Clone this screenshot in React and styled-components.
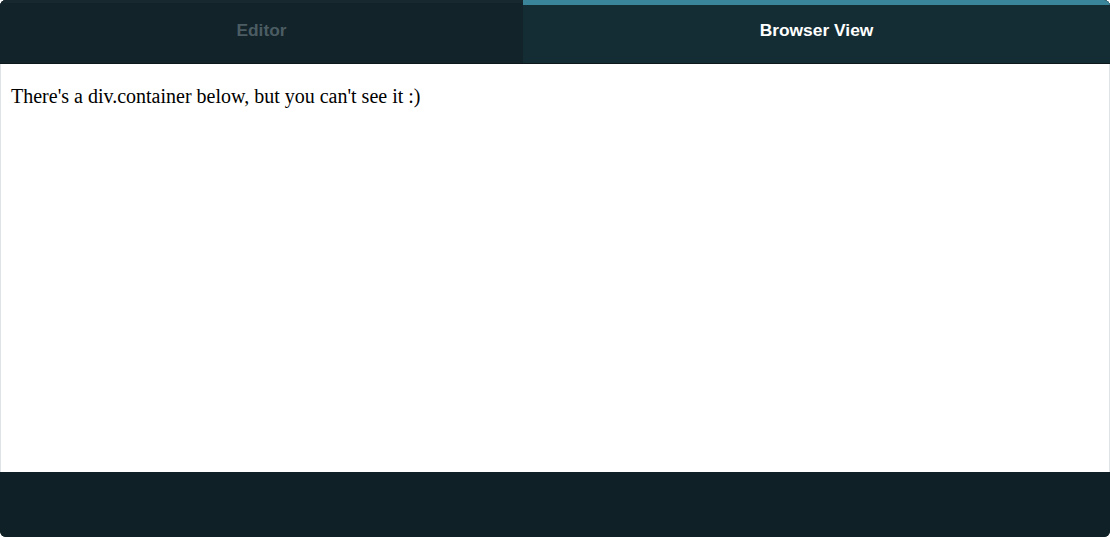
import React from "react";
import styled, { createGlobalStyle } from "styled-components";

const Global = createGlobalStyle`
  html, body {
    margin: 0;
    padding: 0;
    background: #ffffff;
  }
`;

function App() {
  return (
    <>
      <Global />
      <Frame>
        <TabBar>
          <Tab>Editor</Tab>
          <Tab active>Browser View</Tab>
        </TabBar>
        <Viewport>
          <PageText>There's a div.container below, but you can't see it :)</PageText>
        </Viewport>
        <Footer />
      </Frame>
    </>
  );
}

export default App;

const Frame = styled.div`
  width: 1110px;
  height: 537px;
  display: flex;
  flex-direction: column;
  border-radius: 6px;
  overflow: hidden;
  background: #0f2026;
`;

const TabBar = styled.div`
  display: grid;
  grid-template-columns: 523px 1fr;
  height: 63px;
  border-bottom: 1px solid #0c181c;
  background: #13232a;
`;

const Tab = styled.div`
  display: flex;
  align-items: center;
  justify-content: center;
  box-sizing: border-box;
  padding-bottom: ${(p) => (p.active ? "8px" : "6px")};
  font-family: "Liberation Sans", Arial, sans-serif;
  font-weight: bold;
  font-size: 17.4px;
  color: ${(p) => (p.active ? "#ffffff" : "#4b5d63")};
  background: ${(p) => (p.active ? "#142d34" : "#13232a")};
  border-top: ${(p) => (p.active ? "5px solid #3a8599" : "3px solid #17292f")};
`;

const Viewport = styled.div`
  flex: 1;
  background: #ffffff;
  border-left: 1px solid #dde3e6;
  border-right: 1px solid #dde3e6;
  padding: 21px 10px;
`;

const PageText = styled.p`
  margin: 0;
  font-family: "Liberation Serif", "Times New Roman", serif;
  font-size: 20px;
  color: #000000;
`;

const Footer = styled.div`
  height: 65px;
  background: #0f2026;
`;
